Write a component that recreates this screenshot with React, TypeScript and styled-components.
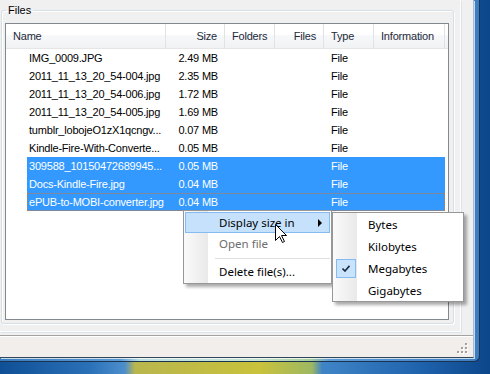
import React from "react";
import styled, { createGlobalStyle } from "styled-components";

interface FileRow {
    name: string
    size: string
    selected?: boolean
    focused?: boolean
}

const rows: FileRow[] = [
    { name: "IMG_0009.JPG", size: "2.49 MB" },
    { name: "2011_11_13_20_54-004.jpg", size: "2.35 MB" },
    { name: "2011_11_13_20_54-006.jpg", size: "1.72 MB" },
    { name: "2011_11_13_20_54-005.jpg", size: "1.69 MB" },
    { name: "tumblr_lobojeO1zX1qcngv...", size: "0.07 MB" },
    { name: "Kindle-Fire-With-Converte...", size: "0.05 MB" },
    { name: "309588_10150472689945...", size: "0.05 MB", selected: true },
    { name: "Docs-Kindle-Fire.jpg", size: "0.04 MB", selected: true },
    { name: "ePUB-to-MOBI-converter.jpg", size: "0.04 MB", selected: true, focused: true },
];

const units = ["Bytes", "Kilobytes", "Megabytes", "Gigabytes"];

//STYLED COMPONENTS:
const GlobalStyle = createGlobalStyle`
    html, body {
        margin: 0;
        padding: 0;
    }
    body {
        width: 490px;
        height: 374px;
        overflow: hidden;
        font-family: "Liberation Sans", Arial, sans-serif;
    }
`

const Desktop = styled.div`
    position: relative;
    width: 490px;
    height: 374px;
    overflow: hidden;
    background: linear-gradient(90deg, #0f4f95 0, #2b71b8 90px, #4d8fcc 125px, #b9b64e 135px,
        #c9c23c 260px, #9db863 312px, #3f85c6 322px, #1f63ad 420px, #0c468a 100%);
`

const Window = styled.div`
    display: flex;
    width: 480px;
    height: 362px;
    box-sizing: border-box;
    padding: 0 6px 4px 0;
    border-bottom-right-radius: 6px;
    border-bottom: 1px solid #1c3350;
    border-right: 1px solid #1c3350;
    background: linear-gradient(90deg, #3a7cc0 0, #5c9ad4 120px, #bfe0e2 140px, #c6e3d2 260px,
        #a8cf9e 310px, #5d9bd6 330px, #3c7dc2 100%);
`

const Client = styled.div`
    display: flex;
    flex-direction: column;
    width: 474px;
    height: 358px;
    flex: none;
    box-sizing: border-box;
    background: #f0f0f0;
    border-right: 1px solid #a9bdd2;
    border-bottom: 1px solid #34465a;
    box-shadow: 1px 1px 0 rgba(255, 255, 255, 0.7);
`

const Body = styled.div`
    flex: 1;
    display: flex;
    padding: 0 12px 3px 0;
`

const Panel = styled.div`
    flex: 1;
    display: flex;
    padding: 2px 6px 7px 1px;
    border-right: 1px solid #fbfcfd;
    border-bottom: 1px solid #fbfcfd;
    box-shadow: 1px 1px 0 #dde3e9;
`

const GroupBox = styled.fieldset`
    flex: 1;
    display: flex;
    margin: 0;
    padding: 4px 4px 3px 3px;
    min-width: 0;
    border: 1px solid #d5dfe5;
    border-radius: 3px;
    box-shadow: inset 1px 1px 0 #fff, 1px 1px 0 #fff;
`

const GroupTitle = styled.legend`
    padding: 0 2px;
    margin-left: 1px;
    font-size: 11px;
    line-height: 17px;
    color: #000;
`

const ListView = styled.div`
    flex: 1;
    display: flex;
    flex-direction: column;
    background: #fff;
    border: 1px solid #828790;
    overflow: hidden;
    font-size: 11px;
    letter-spacing: -0.2px;
`

const Header = styled.div`
    display: flex;
    height: 25px;
    box-sizing: border-box;
    border-bottom: 1px solid #e5e5e5;
    background: linear-gradient(#fff 0, #fff 45%, #f7f8fa 46%, #f1f2f4 100%);
`

const HeaderCell = styled.div<{ $w: number, $right?: boolean }>`
    width: ${p => p.$w}px;
    flex: none;
    box-sizing: border-box;
    display: flex;
    align-items: center;
    justify-content: ${p => p.$right ? "flex-end" : "flex-start"};
    padding: 0 7px 0 7px;
    border-right: 1px solid #dfe3e8;
    color: #1e2a3a;
    white-space: nowrap;
`

const Rows = styled.div`
    display: flex;
    flex-direction: column;
`

const Row = styled.div`
    display: flex;
    height: 18px;
`

const Indent = styled.div`
    width: 21px;
    flex: none;
`

const RowBody = styled.div<{ $selected?: boolean, $focused?: boolean }>`
    display: flex;
    background: ${p => p.$selected ? "#3399ff" : "transparent"};
    color: ${p => p.$selected ? "#fff" : "#000"};
    outline: ${p => p.$focused ? "1px dotted #c8783c" : "none"};
    outline-offset: -1px;
`

const Cell = styled.div<{ $w: number, $right?: boolean }>`
    width: ${p => p.$w}px;
    flex: none;
    box-sizing: border-box;
    display: flex;
    align-items: center;
    justify-content: ${p => p.$right ? "flex-end" : "flex-start"};
    padding: 0 7px;
    white-space: nowrap;
    overflow: hidden;
`

const NameCell = styled(Cell)`
    padding: 0 2px;
`

const StatusBar = styled.div`
    height: 22px;
    box-sizing: border-box;
    display: flex;
    justify-content: flex-end;
    align-items: flex-end;
    padding: 0 5px 3px 0;
    background: #f1eeec;
    border-top: 1px solid #a3a3a3;
    box-shadow: inset 0 1px 0 #fff;
`

const Menu = styled.div<{ $x: number, $y: number, $w: number }>`
    position: absolute;
    left: ${p => p.$x}px;
    top: ${p => p.$y}px;
    width: ${p => p.$w}px;
    box-sizing: border-box;
    padding: 1px;
    border: 1px solid #979797;
    background: linear-gradient(90deg, #fafafa 0, #e9e9e9 24px, #fff 24px);
    box-shadow: 3px 3px 3px rgba(0, 0, 0, 0.33);
    font-family: "Noto Sans", "Open Sans", sans-serif;
    font-size: 11.5px;
    color: #000;
`

const SubMenu = styled(Menu)`
    padding: 0 1px;
`

const MenuItem = styled.div<{ $hot?: boolean, $disabled?: boolean, $h: number }>`
    position: relative;
    display: flex;
    align-items: center;
    height: ${p => p.$h}px;
    box-sizing: border-box;
    padding-left: 33px;
    border: 1px solid ${p => p.$hot ? "#86bbef" : "transparent"};
    background: ${p => p.$hot ? "#c6e1fb" : "transparent"};
    color: ${p => p.$disabled ? "#6d6d6d" : "#000"};
    white-space: nowrap;
`

const SubArrow = styled.span`
    margin-left: auto;
    margin-right: 7px;
    width: 0;
    height: 0;
    border-left: 4px solid #000;
    border-top: 4px solid transparent;
    border-bottom: 4px solid transparent;
`

const Separator = styled.div`
    height: 7px;
    padding: 4px 0 0 30px;
    box-sizing: border-box;
    &::after {
        content: "";
        display: block;
        height: 1px;
        background: #e0e0e0;
        border-bottom: 1px solid #fff;
    }
`

const CheckBox = styled.div`
    position: absolute;
    left: 1px;
    top: 1px;
    width: 20px;
    height: 19px;
    box-sizing: border-box;
    display: flex;
    align-items: center;
    justify-content: center;
    border: 1px solid #86bbef;
    background: #c8e3fb;
`

const Cursor = styled.svg`
    position: absolute;
    left: 275px;
    top: 224px;
`

const columns = [
    { label: "Name", w: 160 },
    { label: "Size", w: 59, right: true },
    { label: "Folders", w: 50 },
    { label: "Files", w: 49, right: true },
    { label: "Type", w: 50 },
    { label: "Information", w: 71 },
];

const App = () => {
    return (
        <Desktop>
            <GlobalStyle />
            <Window>
                <Client>
                    <Body>
                        <Panel>
                            <GroupBox>
                                <GroupTitle>Files</GroupTitle>
                                <ListView>
                                    <Header>
                                        {columns.map(c => (
                                            <HeaderCell key={c.label} $w={c.w} $right={c.right}>{c.label}</HeaderCell>
                                        ))}
                                    </Header>
                                    <Rows>
                                        {rows.map(r => (
                                            <Row key={r.name}>
                                                <Indent />
                                                <RowBody $selected={r.selected} $focused={r.focused}>
                                                    <NameCell $w={139}>{r.name}</NameCell>
                                                    <Cell $w={59} $right>{r.size}</Cell>
                                                    <Cell $w={50}></Cell>
                                                    <Cell $w={49} $right></Cell>
                                                    <Cell $w={50}>File</Cell>
                                                    <Cell $w={71}></Cell>
                                                </RowBody>
                                            </Row>
                                        ))}
                                    </Rows>
                                </ListView>
                            </GroupBox>
                        </Panel>
                    </Body>
                    <StatusBar>
                        <svg width="11" height="11" viewBox="0 0 11 11">
                            {[[8, 0], [4, 4], [8, 4], [0, 8], [4, 8], [8, 8]].map(([x, y]) => (
                                <g key={`${x}-${y}`}>
                                    <rect x={x + 1} y={y + 1} width="2" height="2" fill="#fff" />
                                    <rect x={x} y={y} width="2" height="2" fill="#a0a0a0" />
                                </g>
                            ))}
                        </svg>
                    </StatusBar>
                </Client>
            </Window>

            <Menu $x={183} $y={210} $w={149}>
                <MenuItem $h={21} $hot>
                    Display size in
                    <SubArrow />
                </MenuItem>
                <MenuItem $h={21} $disabled>Open file</MenuItem>
                <Separator />
                <MenuItem $h={21}>Delete file(s)...</MenuItem>
            </Menu>

            <SubMenu $x={332} $y={212} $w={132}>
                {units.map(u => (
                    <MenuItem key={u} $h={22}>
                        {u === "Megabytes" && (
                            <CheckBox>
                                <svg width="8" height="7" viewBox="0 0 8 7">
                                    <path d="M0.5 3.5 L3 6 L7.5 0.8" fill="none" stroke="#1a2a40" strokeWidth="1.6" />
                                </svg>
                            </CheckBox>
                        )}
                        {u}
                    </MenuItem>
                ))}
            </SubMenu>

            <Cursor width="13" height="20" viewBox="0 0 13 20">
                <path d="M0.5 0.5 L0.5 16.5 L4.5 12.5 L7.5 18.5 L9.5 17.5 L6.5 11.5 L11.5 11.5 Z"
                    fill="#fff" stroke="#000" strokeWidth="1" strokeLinejoin="miter" />
            </Cursor>
        </Desktop>
    )
}

export default App
